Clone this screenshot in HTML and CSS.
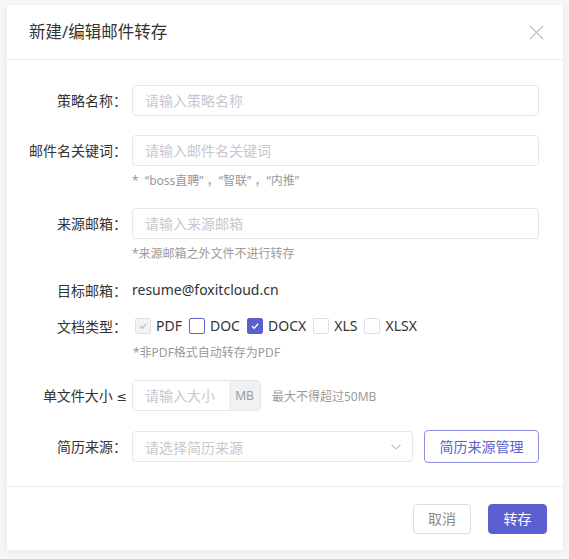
FILE: index.html
```html
<!DOCTYPE html>
<html lang="zh-CN">
<head>
<meta charset="utf-8">
<title>新建/编辑邮件转存</title>
<link rel="stylesheet" href="styles.css">
</head>
<body>
<div class="modal">
  <div class="modal-header">
    <span class="modal-title">新建/编辑邮件转存</span>
    <span class="modal-close">
      <svg width="15" height="15" viewBox="0 0 15 15"><path d="M1 1 L14 14 M14 1 L1 14" stroke="#c4c4c4" stroke-width="1.4" fill="none"/></svg>
    </span>
  </div>
  <div class="modal-body">
    <div class="form-item gap-19">
      <div class="form-label">策略名称<span class="colon">：</span></div>
      <div class="form-content">
        <input class="input" type="text" placeholder="请输入策略名称">
      </div>
    </div>
    <div class="form-item gap-18">
      <div class="form-label">邮件名关键词<span class="colon">：</span></div>
      <div class="form-content">
        <input class="input" type="text" placeholder="请输入邮件名关键词">
        <div class="hint">*&nbsp; “boss直聘” ，“智联” ，“内推”</div>
      </div>
    </div>
    <div class="form-item gap-18">
      <div class="form-label">来源邮箱<span class="colon">：</span></div>
      <div class="form-content">
        <input class="input" type="text" placeholder="请输入来源邮箱">
        <div class="hint">*来源邮箱之外文件不进行转存</div>
      </div>
    </div>
    <div class="form-item gap-16 line-18">
      <div class="form-label">目标邮箱<span class="colon">：</span></div>
      <div class="form-content email">resume@foxitcloud.cn</div>
    </div>
    <div class="form-item gap-18 line-20">
      <div class="form-label">文档类型<span class="colon">：</span></div>
      <div class="form-content">
        <div class="checks">
          <label class="check">
            <span class="box disabled"><svg width="10" height="10" viewBox="0 0 10 10"><path d="M2 5.2 L4.2 7.3 L8.2 2.8" stroke="#b8b8b8" stroke-width="1.2" fill="none"/></svg></span>
            <span class="check-text">PDF</span>
          </label>
          <label class="check">
            <span class="box focus"></span>
            <span class="check-text">DOC</span>
          </label>
          <label class="check">
            <span class="box checked"><svg width="10" height="10" viewBox="0 0 10 10"><path d="M2 5.2 L4.2 7.3 L8.2 2.8" stroke="#ffffff" stroke-width="1.3" fill="none"/></svg></span>
            <span class="check-text">DOCX</span>
          </label>
          <label class="check">
            <span class="box"></span>
            <span class="check-text">XLS</span>
          </label>
          <label class="check">
            <span class="box"></span>
            <span class="check-text">XLSX</span>
          </label>
        </div>
        <div class="hint hint-check">*非PDF格式自动转存为PDF</div>
      </div>
    </div>
    <div class="form-item gap-18">
      <div class="form-label">单文件大小 <span class="le">≤</span></div>
      <div class="form-content size-row">
        <div class="input-group">
          <input class="input input-inner" type="text" placeholder="请输入大小">
          <span class="addon">MB</span>
        </div>
        <span class="size-hint">最大不得超过50MB</span>
      </div>
    </div>
    <div class="form-item row-select">
      <div class="form-label">简历来源<span class="colon">：</span></div>
      <div class="form-content select-row">
        <div class="select">
          <span class="select-placeholder">请选择简历来源</span>
          <svg class="select-arrow" width="12" height="8" viewBox="0 0 12 8"><path d="M1.5 2 L6 6 L10.5 2" stroke="#c0c4cc" stroke-width="1.1" fill="none"/></svg>
        </div>
        <button class="btn btn-outline-primary">简历来源管理</button>
      </div>
    </div>
  </div>
  <div class="modal-footer">
    <button class="btn btn-default">取消</button>
    <button class="btn btn-primary">转存</button>
  </div>
</div>
</body>
</html>
```

FILE: styles.css
```css
* {
  box-sizing: border-box;
}

html, body {
  margin: 0;
  padding: 0;
}

body {
  background: #f7f7f8;
  font-family: "Noto Sans", "Noto Sans CJK SC", sans-serif;
  color: #333;
  width: 569px;
  height: 559px;
  overflow: hidden;
  padding-top: 5px;
  padding-left: 7px;
}

.modal {
  width: 556px;
  height: 545px;
  background: #fff;
  box-shadow: 0 2px 10px rgba(0, 0, 0, 0.08);
  display: flex;
  flex-direction: column;
}

.modal-header {
  flex: none;
  height: 55px;
  border-bottom: 1px solid #ececec;
  padding: 0 19px 0 22px;
  display: flex;
  align-items: center;
  justify-content: space-between;
}

.modal-title {
  font-size: 16.5px;
  color: #333;
  line-height: 24px;
}

.modal-close {
  display: flex;
  width: 15px;
  height: 15px;
  margin-top: 1px;
}

.modal-body {
  flex: none;
  padding: 25px 24px 23px 22px;
  border-bottom: 1px solid #ececec;
}

.form-item {
  display: flex;
  align-items: flex-start;
}

.gap-16 { margin-bottom: 16px; }
.gap-18 { margin-bottom: 18px; }
.gap-19 { margin-bottom: 19px; }

.form-label {
  width: 98px;
  flex: none;
  text-align: right;
  font-size: 14px;
  line-height: 31px;
  color: #333;
  white-space: nowrap;
  margin-right: 5px;
}

.row-select .form-label {
  line-height: 33px;
}

.colon {
  font-family: "Noto Sans CJK TC", "Noto Sans CJK SC", sans-serif;
}

.le {
  font-family: "DejaVu Sans", sans-serif;
  font-size: 12.5px;
}

.line-18 .form-label {
  line-height: 18px;
}

.line-20 .form-label {
  line-height: 20px;
}

.form-content {
  flex: 1;
  min-width: 0;
}

.email {
  font-size: 14px;
  line-height: 18px;
  color: #333;
}

.input {
  display: block;
  width: 100%;
  height: 31px;
  border: 1px solid #e6e6e9;
  border-radius: 4px;
  padding: 0 12px;
  font-family: inherit;
  font-size: 14px;
  color: #333;
  background: #fff;
  outline: none;
}

.input::placeholder {
  color: #c6c8ce;
}

.hint {
  margin-top: 6px;
  font-size: 12px;
  line-height: 18px;
  color: #9a9a9a;
}

.hint-check {
  margin-top: 8px;
  padding-left: 1px;
}

.checks {
  display: flex;
  align-items: center;
  height: 20px;
  padding-left: 3px;
}

.check {
  display: flex;
  align-items: center;
  margin-right: 7px;
}

.box {
  width: 16px;
  height: 16px;
  border: 1px solid #dcdfe6;
  border-radius: 2px;
  background: #fff;
  display: flex;
  align-items: center;
  justify-content: center;
  margin-right: 5px;
}

.box.disabled {
  background: #f3f3f5;
  border-color: #dedfe3;
}

.box.focus {
  border-color: #5b5fcf;
}

.box.checked {
  background: #5b5fcf;
  border-color: #5b5fcf;
}

.check-text {
  font-size: 14px;
  line-height: 20px;
  color: #333;
}

.size-row {
  display: flex;
  align-items: center;
  height: 31px;
}

.input-group {
  display: flex;
  width: 129px;
  height: 31px;
  border: 1px solid #e6e6e9;
  border-radius: 4px;
  overflow: hidden;
}

.input-inner {
  border: none;
  border-radius: 0;
  height: 29px;
  flex: 1;
  width: auto;
  min-width: 0;
}

.addon {
  width: 31px;
  flex: none;
  background: #f1f1f3;
  color: #9a9a9a;
  font-size: 12px;
  display: flex;
  align-items: center;
  justify-content: center;
}

.size-hint {
  margin-left: 11px;
  font-size: 12px;
  color: #9a9a9a;
}

.select-row {
  display: flex;
  align-items: center;
  gap: 11px;
  height: 33px;
}

.select {
  flex: 1;
  height: 31px;
  border: 1px solid #e6e6e9;
  border-radius: 4px;
  padding: 0 10px 0 12px;
  display: flex;
  align-items: center;
  justify-content: space-between;
}

.select-placeholder {
  font-size: 14px;
  color: #c6c8ce;
}

.btn {
  font-family: inherit;
  font-size: 14px;
  border-radius: 4px;
  padding: 0 14px;
  cursor: pointer;
  background: #fff;
  line-height: 1;
}

.btn-outline-primary {
  height: 33px;
  width: 115px;
  border: 1px solid #8e91e0;
  color: #5b5fcf;
  padding: 0;
}

.modal-footer {
  flex: none;
  padding: 17px 16px 16px 0;
  display: flex;
  justify-content: flex-end;
  gap: 17px;
}

.btn-default {
  height: 30px;
  width: 58px;
  padding: 0;
  border: 1px solid #dcdde2;
  color: #8c8c8c;
}

.btn-primary {
  height: 30px;
  width: 59px;
  padding: 0;
  border: 1px solid #5b5fcf;
  background: #5b5fcf;
  color: #fff;
}
```
